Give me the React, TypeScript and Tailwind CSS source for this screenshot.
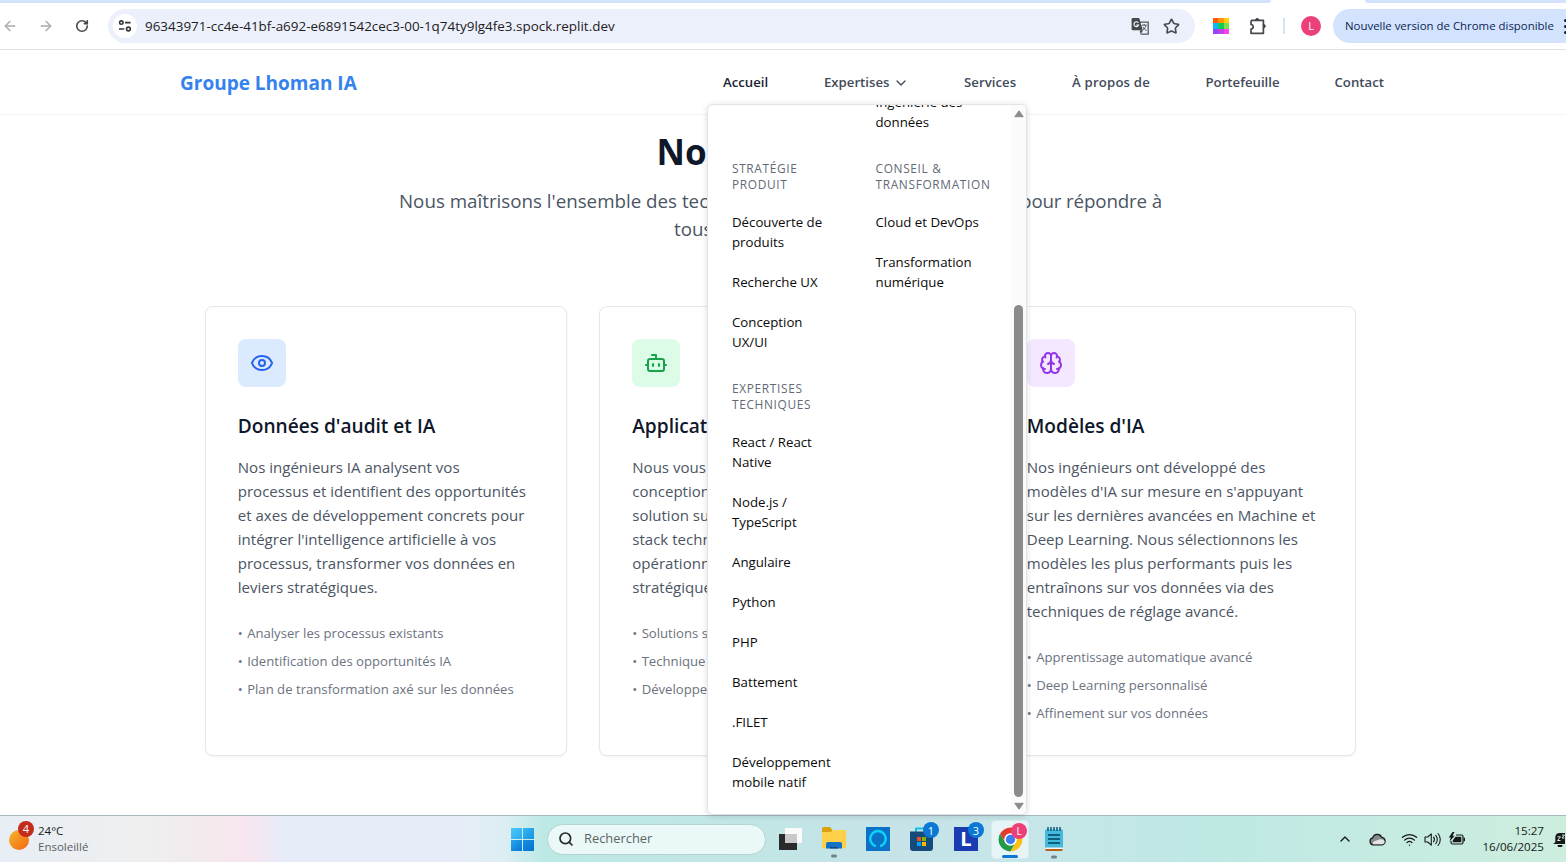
import React from "react";
import {
  ArrowLeft,
  ArrowRight,
  RotateCw,
  ChevronDown,
  ChevronUp,
  Eye,
  Bot,
  Star,
  Search,
  Wifi,
} from "lucide-react";

function TuneIcon() {
  return (
    <svg width="14" height="14" viewBox="0 0 14 14" fill="none" stroke="#333639" strokeWidth="1.6">
      <circle cx="3.3" cy="3.6" r="1.7" />
      <path d="M7 3.6h5.6M1 10h5.2" />
      <circle cx="10.4" cy="10" r="1.9" />
    </svg>
  );
}

function TranslateIcon() {
  return (
    <svg className="shrink-0" width="18" height="18" viewBox="0 0 18 18" fill="none">
      <path d="M7.5 5.2h9.7v11.9h-7.6" stroke="#55585c" strokeWidth="1.3" />
      <path d="M1.8 1h6.4l3.6 12.2H1.8A1.2 1.2 0 0 1 .6 12V2.2A1.2 1.2 0 0 1 1.8 1Z" fill="#45484c" />
      <path d="M7.3 5.8A2.4 2.4 0 1 0 7.6 8H5.3" stroke="#fff" strokeWidth="1.1" />
      <path d="M10.8 8.2h5M13.2 7v1.2M15 8.3c-.4 2-1.7 3.5-3 4.5M11.9 10l3.5 4" stroke="#55585c" strokeWidth="1" />
      <path d="M8.6 13.4 9.6 17l2.7-3.7Z" fill="#45484c" />
    </svg>
  );
}

function PuzzleIcon() {
  return (
    <svg width="18" height="18" viewBox="0 0 18 18" fill="none" stroke="#45484c" strokeWidth="1.7" strokeLinejoin="round">
      <path d="M2 3.4h4.3M10 3.4h4.4v4M14.4 11v5.3H2v-4.2c1.5-.2 2.2-1.1 2.2-2.3S3.500 7.700 2 7.500V3.400" />
      <path d="M6 3.4h4.5M14.4 7v4.3" />
      <path d="M6.6 3a1.6 1.6 0 0 1 3.2 0ZM14.7 7.6a1.6 1.6 0 0 1 0 3.2Z" fill="#45484c" strokeWidth="1" />
    </svg>
  );
}

function BrainIcon() {
  return (
    <svg width="24" height="24" viewBox="0 0 24 24" fill="none" stroke="#9333ea" strokeWidth="2" strokeLinecap="round" strokeLinejoin="round">
      <path d="M12 5a3 3 0 1 0-5.997.125 4 4 0 0 0-2.526 5.770 4 4 0 0 0 .556 6.588A4 4 0 1 0 12 18Z" />
      <path d="M12 5a3 3 0 1 1 5.997.125 4 4 0 0 1 2.526 5.770 4 4 0 0 1-.556 6.588A4 4 0 1 1 12 18Z" />
      <path d="M15 13a4.500 4.500 0 0 1-3-4 4.500 4.500 0 0 1-3 4" />
      <path d="M17.599 6.500a3 3 0 0 0 .399-1.375M6.003 5.125A3 3 0 0 0 6.401 6.500M3.477 10.896a4 4 0 0 1 .585-.396M19.938 10.500a4 4 0 0 1 .585.396M6 18a4 4 0 0 1-1.967-.516M19.967 17.484A4 4 0 0 1 18 18" />
    </svg>
  );
}

const swatches = [
  "bg-[#ff5a0a]", "bg-[#ff9408]", "bg-[#ffd20a]",
  "bg-[#08b8f8]", "bg-[#10cc58]", "bg-[#80e050]",
  "bg-[#8a48f8]", "bg-[#c040f0]", "bg-[#f840f0]",
];

function BrowserBar() {
  return (
    <div className="h-[50px] shrink-0 border-b border-[#dfe1e3] bg-white">
      <div className="flex h-[3px] justify-between">
        <div className="w-[1271px] rounded-br-[6px] bg-[#d3e3fd]" />
        <div className="w-[201px] rounded-bl-[6px] bg-[#d3e3fd]" />
      </div>
      <div className="flex h-[46px] items-center">
        <div className="flex w-[108px] shrink-0 items-center">
          <ArrowLeft className="ml-[2px] h-4 w-4 text-[#a8aaac]" strokeWidth={2} />
          <ArrowRight className="ml-5 h-4 w-4 text-[#a8aaac]" strokeWidth={2} />
          <RotateCw className="ml-[21px] h-[14px] w-[14px] text-[#45484c]" strokeWidth={2.8} />
        </div>
        <div className="flex h-[34px] w-[1087px] shrink-0 items-center rounded-full bg-[#ebf0fa]">
          <div className="ml-[5px] flex h-6 w-6 items-center justify-center rounded-full bg-white">
            <TuneIcon />
          </div>
          <span className="ml-2 flex-1 whitespace-nowrap text-[13.44px] text-[#1f2023]">
            96343971-cc4e-41bf-a692-e6891542cec3-00-1q74ty9lg4fe3.spock.replit.dev
          </span>
          <TranslateIcon />
          <Star className="ml-[14px] mr-[15px] h-[17px] w-[17px] text-[#45484c]" strokeWidth={2.3} />
        </div>
        <div className="ml-[18px] grid h-4 w-4 shrink-0 grid-cols-3">
          {swatches.map((c) => (
            <div key={c} className={c} />
          ))}
        </div>
        <div className="ml-5 shrink-0">
          <PuzzleIcon />
        </div>
        <div className="ml-4 h-4 w-[2px] shrink-0 bg-[#d3e3fd]" />
        <div className="ml-4 flex h-5 w-5 shrink-0 items-center justify-center rounded-full bg-[#ec407a] text-[11px] text-white">
          L
        </div>
        <div className="ml-3 flex h-[34px] w-[233px] shrink-0 items-center overflow-hidden rounded-l-full bg-[#d3e3fd] pl-3">
          <span className="w-[209px] shrink-0 whitespace-nowrap text-[11.42px] text-[#0b2555]">
            Nouvelle version de Chrome disponible
          </span>
          <div className="ml-[10px] flex shrink-0 flex-col gap-[3px]">
            <div className="h-[3px] w-[3px] rounded-full bg-[#0b2555]" />
            <div className="h-[3px] w-[3px] rounded-full bg-[#0b2555]" />
            <div className="h-[3px] w-[3px] rounded-full bg-[#0b2555]" />
          </div>
        </div>
      </div>
    </div>
  );
}

function Header() {
  return (
    <header className="flex h-[65px] shrink-0 items-center border-b border-[#f3f4f6] bg-white pt-[2px] pl-[180px]">
      <div className="w-[543px] text-[19px] font-bold text-[#3482ee]">Groupe Lhoman IA</div>
      <nav className="flex text-[13.2px] font-semibold whitespace-nowrap text-[#414b5a]">
        <a className="w-[101px] text-[#1b2433]">Accueil</a>
        <a className="flex w-[140px] items-center gap-1">
          Expertises
          <ChevronDown className="h-4 w-4" />
        </a>
        <a className="w-[108px] tracking-[0.05px]">Services</a>
        <a className="w-[133.5px] tracking-[0.18px]">À propos de</a>
        <a className="w-[129px]">Portefeuille</a>
        <a>Contact</a>
      </nav>
    </header>
  );
}

interface CardProps {
  icon: React.ReactNode;
  tint: string;
  title: string;
  lines: string[];
  points: string[];
}

function Card({ icon, tint, title, lines, points }: CardProps) {
  return (
    <div className="w-[362.5px] rounded-lg border border-[#e5e7eb] bg-white p-8 shadow-[0_1px_2px_rgba(0,0,0,0.05)]">
      <div className={"flex h-12 w-12 items-center justify-center rounded-lg " + tint}>{icon}</div>
      <h3 className="mt-[25px] text-[19.1px] leading-7 font-semibold text-[#0f172a]">{title}</h3>
      <p className="mt-[15px] text-[15.05px] leading-6 whitespace-nowrap text-[#4b5563]">
        {lines.map((l) => (
          <span key={l} className="block">{l}</span>
        ))}
      </p>
      <ul className="mt-6 space-y-2 text-[13.15px] leading-5 whitespace-nowrap text-[#6b7280]">
        {points.map((p) => (
          <li key={p}><span className="mr-px">•</span> {p}</li>
        ))}
      </ul>
    </div>
  );
}

const cards: CardProps[] = [
  {
    icon: <Eye className="h-6 w-6 text-[#2563eb]" />,
    tint: "bg-[#dbeafe]",
    title: "Données d'audit et IA",
    lines: [
      "Nos ingénieurs IA analysent vos",
      "processus et identifient des opportunités",
      "et axes de développement concrets pour",
      "intégrer l'intelligence artificielle à vos",
      "processus, transformer vos données en",
      "leviers stratégiques.",
    ],
    points: [
      "Analyser les processus existants",
      "Identification des opportunités IA",
      "Plan de transformation axé sur les données",
    ],
  },
  {
    icon: <Bot className="h-6 w-6 text-[#16a34a]" />,
    tint: "bg-[#dcfce7]",
    title: "Applications IA",
    lines: [
      "Nous vous accompagnons dans la",
      "conception et la création d'une",
      "solution sur mesure avec une",
      "stack technique moderne et",
      "opérationnelle pour vos enjeux",
      "stratégiques.",
    ],
    points: ["Solutions sur mesure", "Technique moderne", "Développement agile"],
  },
  {
    icon: <BrainIcon />,
    tint: "bg-[#f3e8ff]",
    title: "Modèles d'IA",
    lines: [
      "Nos ingénieurs ont développé des",
      "modèles d'IA sur mesure en s'appuyant",
      "sur les dernières avancées en Machine et",
      "Deep Learning. Nous sélectionnons les",
      "modèles les plus performants puis les",
      "entraînons sur vos données via des",
      "techniques de réglage avancé.",
    ],
    points: [
      "Apprentissage automatique avancé",
      "Deep Learning personnalisé",
      "Affinement sur vos données",
    ],
  },
];

function MenuSection({ title, items }: { title: string[]; items: string[][] }) {
  return (
    <section>
      <h4 className="text-[11.9px] leading-4 font-medium tracking-[0.65px] text-[#626976]">
        {title.map((l) => (
          <span key={l} className="block">{l}</span>
        ))}
      </h4>
      <ul className="mt-5 space-y-5">
        {items.map((it) => (
          <li key={it[0]}>
            {it.map((l) => (
              <span key={l} className="block">{l}</span>
            ))}
          </li>
        ))}
      </ul>
    </section>
  );
}

function ExpertiseMenu() {
  return (
    <div className="absolute top-[104px] left-[707px] z-10 flex h-[711px] w-[320px] overflow-hidden rounded-md border border-[#e2e4e8] bg-white text-[13.25px] leading-5 whitespace-nowrap text-[#0a0a0a] shadow-[0_1px_6px_rgba(0,0,0,0.14)]">
      <div className="box-content flex w-[143.5px] flex-col gap-7 pt-[55px] pl-6">
        <MenuSection
          title={["STRATÉGIE", "PRODUIT"]}
          items={[["Découverte de", "produits"], ["Recherche UX"], ["Conception", "UX/UI"]]}
        />
        <MenuSection
          title={["EXPERTISES", "TECHNIQUES"]}
          items={[
            ["React / React", "Native"],
            ["Node.js /", "TypeScript"],
            ["Angulaire"],
            ["Python"],
            ["PHP"],
            ["Battement"],
            [".FILET"],
            ["Développement", "mobile natif"],
          ]}
        />
      </div>
      <div className="-mt-[13px] flex-1">
        <p className="mb-7">
          <span className="block">Ingénierie des</span>
          <span className="block">données</span>
        </p>
        <MenuSection
          title={["CONSEIL &", "TRANSFORMATION"]}
          items={[["Cloud et DevOps"], ["Transformation", "numérique"]]}
        />
      </div>
      <div className="flex w-[15px] flex-col items-center bg-[#fbfbfb] pt-[5px] pb-[4px]">
        <svg width="10" height="8" viewBox="0 0 10 8">
          <path d="M5 .8 9.2 6.7H.8Z" fill="#8b8b8b" stroke="#8b8b8b" strokeLinejoin="round" />
        </svg>
        <div className="mt-[187px] w-[9px] flex-1 rounded-full bg-[#8b8b8b]" />
        <svg className="mt-[5px]" width="10" height="8" viewBox="0 0 10 8">
          <path d="M5 7.2 9.2 1.3H.8Z" fill="#8b8b8b" stroke="#8b8b8b" strokeLinejoin="round" />
        </svg>
      </div>
    </div>
  );
}

function ChromeLogo() {
  return (
    <svg width="25" height="25" viewBox="0 0 48 48">
      <circle cx="24" cy="24" r="23" fill="#fff" />
      <path d="M4.1 12.5A23 23 0 0 0 24 47L34 29.7 14 29.7Z" fill="#229a48" />
      <path d="M43.9 12.5A23 23 0 0 1 24 47L34 29.7 30 12.5Z" fill="#fbc116" />
      <path d="M4.1 12.5A23 23 0 0 1 43.9 12.5H24L14 29.7Z" fill="#e33b2e" />
      <circle cx="24" cy="24" r="12" fill="#fff" />
      <circle cx="24" cy="24" r="9" fill="#3c7ff0" />
    </svg>
  );
}

function Badge({ children }: { children: React.ReactNode }) {
  return (
    <span className="absolute -top-[5px] -right-[6px] flex h-4 w-4 items-center justify-center rounded-full bg-[#0a78d4] text-[11px] leading-none font-normal text-white">
      {children}
    </span>
  );
}

function Taskbar() {
  return (
    <footer className="flex h-[47px] shrink-0 items-center border-t border-[#a9b8bd] bg-[linear-gradient(90deg,#e7eef5_0px,#efefef_150px,#f2eaec_205px,#f8e5ef_245px,#e6ecf8_285px,#e7edf8_460px,#dbeef3_505px,#bce9e4_545px,#c0e6e5_700px,#c6e4e8_900px,#c5e6e8_1050px,#bfe8e4_1200px,#c5ebe2_1400px,#cdeedd_1566px)] *:shrink-0">
      <div className="flex w-[511px] items-center pl-[9px]">
        <div className="relative mt-px h-5 w-5 rounded-full bg-[linear-gradient(135deg,#f5b731,#f3640c)]">
          <span className="absolute -top-[9px] left-[9px] flex h-4 w-4 items-center justify-center rounded-full bg-[#c42b1c] text-[11px] leading-none text-white">
            4
          </span>
        </div>
        <div className="ml-[9px] text-[11.5px] leading-4">
          <div className="text-[#1c1c1c]">24°C</div>
          <div className="text-[#5b6064]">Ensoleillé</div>
        </div>
      </div>
      <div className="grid h-[23px] w-[23px] grid-cols-2 gap-px">
        <div className="bg-[linear-gradient(135deg,#4ccbf8,#28a8ec)]" />
        <div className="bg-[linear-gradient(135deg,#35b8f2,#1590e2)]" />
        <div className="bg-[linear-gradient(135deg,#28a6ea,#0878d4)]" />
        <div className="bg-[linear-gradient(135deg,#1590e2,#0870cf)]" />
      </div>
      <div className="ml-[13px] flex h-[31px] w-[219px] items-center rounded-full border border-[#b5d2d3] bg-[#ebf8f8] pl-[10px]">
        <Search className="h-4 w-4 text-[#27292b]" strokeWidth={2.5} />
        <span className="ml-[10px] text-[12.9px] text-[#5c6466]">Rechercher</span>
      </div>
      <svg className="ml-3" width="25" height="24" viewBox="0 0 25 24">
        <rect x="1" y="7" width="18" height="16" fill="#2a2a2a" />
        <path d="M7 1h17v15H7Z" fill="#fff" fillOpacity=".75" />
        <path d="M19 1h5v15h-5M7 1h17v6H7Z" fill="#fafafa" />
      </svg>
      <svg className="ml-[19px] mt-[7px]" width="25" height="31" viewBox="0 0 25 31">
        <path d="M0 1.500A1.500 1.500 0 0 1 1.500 0H8l2 2.500V7H0Z" fill="#dda20b" />
        <path d="M0 5h9l2-2h12a1.200 1.200 0 0 1 1.200 1.200V20a1.200 1.200 0 0 1-1.200 1.200H1.200A1.200 1.200 0 0 1 0 20Z" fill="#ffd04a" />
        <path d="M4 21.500V17a2 2 0 0 1 2-2h12a2 2 0 0 1 2 2v4.500Z" fill="#1372c4" />
        <path d="M8 21.500V20h8v1.500Z" fill="#064b92" />
        <rect x="9" y="27.500" width="6" height="3" rx="1.500" fill="#718386" />
      </svg>
      <div className="ml-[19px] flex h-6 w-6 items-center justify-center bg-[#0b72c8]">
        <svg width="20" height="20" viewBox="0 0 20 20" fill="none">
          <path d="M8 17.200a7.700 7.700 0 1 1 4 0" stroke="#0bd3fb" strokeWidth="2.400" />
        </svg>
      </div>
      <div className="relative ml-5 h-6 w-[23px]">
        <svg width="23" height="24" viewBox="0 0 23 24">
          <path d="M6 6V1.500h8" fill="none" stroke="#1bbbe9" strokeWidth="2" />
          <path d="M0 4.500h23V21a3 3 0 0 1-3 3H3a3 3 0 0 1-3-3Z" fill="#174a7c" />
          <rect x="7" y="10" width="4" height="4" fill="#f25022" />
          <rect x="12" y="10" width="4" height="4" fill="#7fba00" />
          <rect x="7" y="15" width="4" height="4" fill="#00a4ef" />
          <rect x="12" y="15" width="4" height="4" fill="#ffb900" />
        </svg>
        <Badge>1</Badge>
      </div>
      <div className="relative ml-[21px] flex h-6 w-6 items-center justify-center bg-[#1b3bb0] text-[20px] leading-none font-bold text-white">
        L
        <Badge>3</Badge>
      </div>
      <div className="relative ml-[13px] flex h-[39px] w-[38px] items-center justify-center rounded border border-[#d9edef] bg-[#e6f4f6]">
        <ChromeLogo />
        <span className="absolute top-[2px] right-px flex h-4 w-4 items-center justify-center rounded-full bg-[#ec407a] text-[10px] leading-none text-white">
          L
        </span>
        <span className="absolute bottom-0 left-[10px] h-[3px] w-4 rounded-full bg-[#0a78d4]" />
      </div>
      <svg className="ml-4 mt-[8px]" width="18" height="33" viewBox="0 0 18 33">
        <rect x="0" y="2.500" width="18" height="20" rx="1" fill="#45b9dd" />
        <path d="M3 0v4M6 0v4M9 0v4M12 0v4M15 0v4" stroke="#17617c" strokeWidth="1.600" />
        <path d="M3 8h12M3 12h12M3 16h12" stroke="#0d5f7c" strokeWidth="2" />
        <path d="M0 20.500h18V22H0Z" fill="#f5f5f5" />
        <path d="M0 22h18l-1 2H1Z" fill="#b56217" />
        <rect x="6" y="28.500" width="6" height="3" rx="1.500" fill="#718386" />
      </svg>
      <div className="ml-[274px] flex items-center text-[#17191a]">
        <ChevronUp className="h-4 w-4" strokeWidth={2} />
        <svg className="ml-[16px]" width="17" height="13" viewBox="0 0 17 13">
          <path d="M4.300 11.800a3.500 3.500 0 0 1-.6-6.900 4.800 4.800 0 0 1 9-.6 3.800 3.800 0 0 1 .4 7.500Z" fill="#858b8c" stroke="#17191a" strokeWidth="1.200" />
          <path d="M4 11.200a2.700 2.700 0 0 1 2-3.200l5-1.700c2-.4 4.800 1 4.600 3 0 1-1.200 1.900-2.300 1.900Z" fill="#e3e5e5" />
        </svg>
        <Wifi className="ml-[15px] h-[17px] w-[17px]" strokeWidth={1.8} />
        <svg className="ml-[6px]" width="18" height="15" viewBox="0 0 18 15" fill="none" stroke="#17191a" strokeWidth="1.100" strokeLinejoin="round" strokeLinecap="round">
          <path d="M1 5h2.700L7.300 1.800v11.400L3.700 10H1ZM9.500 5.200a3.500 3.500 0 0 1 0 4.600M11.700 3.400a6 6 0 0 1 0 8.200M14 1.500a9 9 0 0 1 0 12" />
        </svg>
        <svg className="ml-[6px]" width="18" height="14" viewBox="0 0 18 14">
          <path d="M8 3h5.500A1.500 1.500 0 0 1 15 4.500v6a1.500 1.500 0 0 1-1.500 1.500h-9A1.500 1.500 0 0 1 3 10.500V9" fill="none" stroke="#17191a" strokeWidth="1.200" />
          <path d="M7.500 4.700h5.800v5.600H4.700V8.500ZM15.600 5.800H17v3.400h-1.400ZM4.500 0 .8 5.500h2L1.500 9.500l5.200-5.700H4.500L6.500 0Z" fill="#17191a" />
        </svg>
      </div>
      <div className="ml-[16px] w-[62px] text-right text-[11.6px] leading-4 text-[#17191a]">
        <div>15:27</div>
        <div>16/06/2025</div>
      </div>
      <svg className="ml-[9px]" width="12" height="15" viewBox="0 0 12 15">
        <path d="M2.300 10.500V5A4.500 4.500 0 0 1 7 1h5v11H0l2.300-1.800ZM4.500 13h5a2.500 2.500 0 0 1-5 0Z" fill="#17191a" />
        <path d="M4.500 4.800h3L4.500 8.500h3M9 3h2.500L9 6h2.500" stroke="#d5eee4" strokeWidth="1" fill="none" />
      </svg>
    </footer>
  );
}

export default function App() {
  return (
    <div className="relative flex h-[862px] w-[1566px] flex-col overflow-hidden bg-white font-['Open_Sans',sans-serif]">
      <BrowserBar />
      <Header />
      <main className="flex-1 overflow-hidden">
        <div className="flex w-[1561px] flex-col items-center pt-[17px]">
          <h2 className="w-[248px] text-[35px] leading-10 font-bold whitespace-nowrap text-[#0f172a]">Nos expertises</h2>
          <div className="mt-[15px] w-[763px] text-[18.75px] leading-7 whitespace-nowrap text-[#4b5563]">
            <div className="flex justify-between">
              <span>Nous maîtrisons l'ensemble des technologies</span>
              <span className="tracking-[-0.15px]">pour répondre à</span>
            </div>
            <div className="pl-[275px]">tous vos besoins en IA</div>
          </div>
          <div className="mt-[63px] flex gap-8">
            {cards.map((c) => (
              <Card key={c.title} {...c} />
            ))}
          </div>
        </div>
      </main>
      <Taskbar />
      <ExpertiseMenu />
    </div>
  );
}
